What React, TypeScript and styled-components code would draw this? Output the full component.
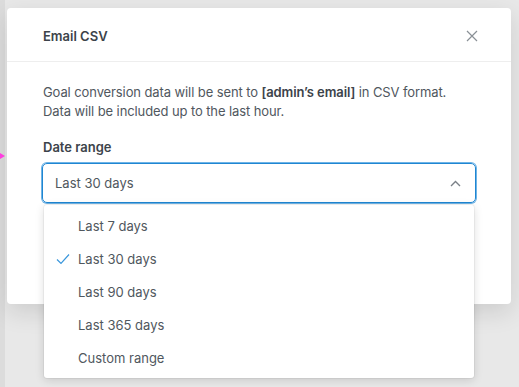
import React from "react";
import styled, { createGlobalStyle } from "styled-components";

const Global = createGlobalStyle`
  html, body { margin: 0; padding: 0; }
  body {
    background: #e7e7e7;
    font-family: Inter, "Noto Sans", sans-serif;
    -webkit-font-smoothing: antialiased;
  }
`;

const Page = styled.div`
  position: relative;
  width: 519px;
  height: 387px;
  overflow: hidden;
  padding: 8px 0 0 7px;
  box-sizing: border-box;
  background: linear-gradient(to right, #dcdcdc 0, #dcdcdc 5px, #e8e8e8 5px);
`;

const Marker = styled.div`
  position: absolute;
  left: 0;
  top: 153px;
  width: 0;
  height: 0;
  border-top: 3px solid transparent;
  border-bottom: 3px solid transparent;
  border-left: 5px solid #ff3ee0;
`;

const Modal = styled.div`
  width: 504px;
  height: 296px;
  background: #fff;
  border-radius: 4px;
  box-shadow: 0 8px 24px rgba(0, 0, 0, 0.12);
  display: flex;
  flex-direction: column;
`;

const Header = styled.div`
  height: 54px;
  box-sizing: border-box;
  display: flex;
  align-items: center;
  justify-content: space-between;
  padding: 3px 32px 0 36px;
  border-bottom: 1px solid #eeeeee;
  flex-shrink: 0;
`;

const Title = styled.h1`
  margin: 0;
  font-size: 13px;
  font-weight: 600;
  color: #3c434a;
`;

const Close = styled.button`
  border: 0;
  background: none;
  padding: 0;
  width: 14px;
  height: 14px;
  display: flex;
  align-items: center;
  justify-content: center;
  color: #8a9096;
`;

const Body = styled.div`
  padding: 21px 0 0 36px;
`;

const Desc = styled.p`
  margin: 0;
  font-size: 13px;
  letter-spacing: -0.1px;
  line-height: 19px;
  color: #50575e;
  white-space: nowrap;
  strong { font-weight: 600; color: #3c434a; }
`;

const Label = styled.div`
  margin-top: 17px;
  font-size: 13px;
  font-weight: 600;
  color: #3c434a;
  line-height: 19px;
`;

const Field = styled.div`
  position: relative;
  margin-top: 6px;
  width: 434px;
  margin-left: -1px;
`;

const Select = styled.div`
  height: 40px;
  box-sizing: border-box;
  border: 1.5px solid #1f86d2;
  box-shadow: 0 0 0 1px #6fb4e6;
  border-radius: 5px;
  display: flex;
  align-items: center;
  justify-content: space-between;
  padding: 0 14px 0 12px;
  font-size: 13px;
  color: #50575e;
`;

const Menu = styled.ul`
  position: absolute;
  left: 2px;
  right: 2px;
  top: 42px;
  margin: 0;
  padding: 4px 0;
  list-style: none;
  background: #fff;
  border-radius: 3px;
  box-shadow: 0 2px 10px rgba(0, 0, 0, 0.14), 0 0 0 1px rgba(0, 0, 0, 0.04);
`;

const Item = styled.li`
  height: 33px;
  display: flex;
  align-items: center;
  padding-left: 34px;
  position: relative;
  font-size: 13px;
  color: #50575e;
`;

const Check = styled.svg`
  position: absolute;
  left: 12px;
  top: 50%;
  transform: translateY(-50%);
`;

const options = ["Last 7 days", "Last 30 days", "Last 90 days", "Last 365 days", "Custom range"];

export default function App() {
  const selected = "Last 30 days";
  return (
    <>
      <Global />
      <Page>
        <Marker />
        <Modal>
          <Header>
            <Title>Email CSV</Title>
            <Close aria-label="Close">
              <svg width="12" height="12" viewBox="0 0 12 12" fill="none" stroke="currentColor" strokeWidth="1.2">
                <path d="M1 1L11 11M11 1L1 11" />
              </svg>
            </Close>
          </Header>
          <Body>
            <Desc>
              Goal conversion data will be sent to <strong>[admin’s email]</strong> in CSV format.
              <br />
              Data will be included up to the last hour.
            </Desc>
            <Label>Date range</Label>
            <Field>
              <Select>
                <span>{selected}</span>
                <svg width="11" height="7" viewBox="0 0 11 7" fill="none" stroke="#7a8087" strokeWidth="1.4">
                  <path d="M1 6L5.5 1.5L10 6" />
                </svg>
              </Select>
              <Menu>
                {options.map((o) => (
                  <Item key={o}>
                    {o === selected && (
                      <Check width="14" height="11" viewBox="0 0 14 11" fill="none" stroke="#3a97dc" strokeWidth="1.2">
                        <path d="M1 6L5 10L13 1" />
                      </Check>
                    )}
                    {o}
                  </Item>
                ))}
              </Menu>
            </Field>
          </Body>
        </Modal>
      </Page>
    </>
  );
}
